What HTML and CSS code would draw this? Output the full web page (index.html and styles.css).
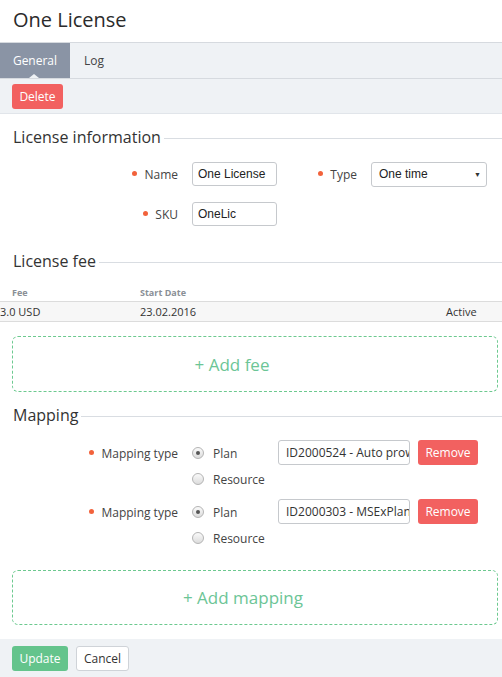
FILE: index.html
```html
<!DOCTYPE html>
<html>
<head>
<meta charset="utf-8">
<link rel="stylesheet" href="styles.css">
</head>
<body>
<div class="page">
  <header class="header"><h1 class="title">One License</h1></header>
  <nav class="tabs">
    <div class="tab active">General</div>
    <div class="tab">Log</div>
  </nav>
  <div class="toolbar"><button class="btn btn-red btn-delete">Delete</button></div>

  <section class="section">
    <div class="sec-title"><span>License information</span><i></i></div>
    <div class="form">
      <div class="frow">
        <label class="lbl lbl-first"><b class="dot"></b>Name</label>
        <input class="inp inp-name" value="One License">
        <label class="lbl lbl-type"><b class="dot"></b>Type</label>
        <div class="select"><span>One time</span><span class="arrow">▼</span></div>
      </div>
      <div class="frow">
        <label class="lbl lbl-first"><b class="dot"></b>SKU</label>
        <input class="inp inp-name" value="OneLic">
      </div>
    </div>
  </section>

  <section class="section sec-fee">
    <div class="sec-title"><span>License fee</span><i></i></div>
    <div class="table">
      <div class="thead"><span class="c1">Fee</span><span class="c2">Start Date</span></div>
      <div class="trow"><span class="c1 clip">3.0 USD</span><span class="c2">23.02.2016</span><span class="c3">Active</span></div>
    </div>
    <div class="addbox addfee">+ Add fee</div>
  </section>

  <section class="section sec-map">
    <div class="sec-title"><span>Mapping</span><i></i></div>
    <div class="mapping">
      <div class="mrow">
        <label class="lbl lbl-first"><b class="dot"></b>Mapping type</label>
        <div class="radios">
          <div class="radio-line"><span class="radio checked"></span>Plan</div>
          <div class="radio-line"><span class="radio"></span>Resource</div>
        </div>
        <div class="minp">ID2000524 - Auto prow</div>
        <button class="btn btn-red btn-remove">Remove</button>
      </div>
      <div class="mrow">
        <label class="lbl lbl-first"><b class="dot"></b>Mapping type</label>
        <div class="radios">
          <div class="radio-line"><span class="radio checked"></span>Plan</div>
          <div class="radio-line"><span class="radio"></span>Resource</div>
        </div>
        <div class="minp">ID2000303 - MSExPlan</div>
        <button class="btn btn-red btn-remove">Remove</button>
      </div>
    </div>
    <div class="addbox addmap">+ Add mapping</div>
  </section>

  <footer class="footer">
    <button class="btn btn-green">Update</button>
    <button class="btn btn-white">Cancel</button>
  </footer>
</div>
</body>
</html>
```
FILE: styles.css
```css
* { box-sizing: border-box; }
html, body { margin: 0; padding: 0; background: #fff; }
body { font-family: "Open Sans", "Liberation Sans", sans-serif; color: #333; width: 502px; height: 677px; overflow: hidden; }
.page { width: 502px; min-height: 677px; display: flex; flex-direction: column; }
.page > * { flex-shrink: 0; }

.header { height: 43px; border-bottom: 1px solid #d6dadf; padding-left: 13px; }
.title { margin: 0; font-weight: 400; font-size: 20px; line-height: 40px; color: #2b2b2b; }

.tabs { height: 36px; background: #eff2f5; border-bottom: 1px solid #d6dadf; display: flex; }
.tab { font-size: 12px; line-height: 35px; padding: 0 14px; color: #444; }
.tab.active { background: #8a94a5; color: #fff; width: 70px; padding: 0; text-align: center; position: relative; }
.tab.active::after { content: ""; position: absolute; left: 29px; bottom: 0; border-left: 5px solid transparent; border-right: 5px solid transparent; border-bottom: 4px solid #eff2f5; }

.toolbar { height: 35px; background: #eff2f5; border-bottom: 1px solid #e1e5ea; padding: 5px 12px; }

.btn { font-family: "Open Sans", "Liberation Sans", sans-serif; font-size: 12px; border-radius: 3px; border: 0; height: 25px; padding: 0 10px; line-height: 25px; cursor: pointer; }
.btn-red { background: #f26160; color: #fff; }
.btn-delete { width: 51px; padding: 0; }
.btn-green { background: #64c48c; color: #fff; }
.btn-white { background: #fff; color: #333; border: 1px solid #cfd3d8; line-height: 23px; padding: 0 9px; }

.section { padding-top: 12px; }
.sec-title { display: flex; align-items: center; padding-left: 13px; height: 22px; }
.sec-title span { font-size: 16px; color: #333; white-space: nowrap; }
.sec-title i { flex: 1; height: 1px; background: #d9dde2; margin-left: 3px; margin-top: 2px; }

.form { padding-top: 14px; display: flex; flex-direction: column; gap: 16px; }
.frow { display: flex; align-items: center; height: 24px; }
.lbl { font-size: 12px; color: #444; display: flex; align-items: center; justify-content: flex-end; white-space: nowrap; }
.lbl-first { width: 178px; margin-right: 14px; }
.lbl-type { width: 80px; margin-right: 14px; }
.dot { width: 5px; height: 5px; border-radius: 50%; background: #f2623b; margin-right: 7px; margin-top: -1px; }
.inp { font-family: "Liberation Sans", Arial, sans-serif; font-size: 12px; color: #222; height: 24px; border: 1px solid #c6c9cd; border-radius: 3px; padding: 0 5px; }
.inp-name { width: 85px; }
.select { width: 116px; height: 25px; border: 1px solid #c6c9cd; border-radius: 3px; display: flex; align-items: center; justify-content: space-between; padding: 0 5px 0 7px; font-family: "Liberation Sans", Arial, sans-serif; font-size: 12px; color: #222; }
.arrow { font-size: 7px; color: #333; }

.sec-fee { padding-top: 24px; }
.table { margin-top: 12px; }
.thead { height: 18px; display: flex; align-items: center; font-size: 9px; font-weight: 700; color: #8a8f96; border-bottom: 1px solid #dcdcdc; }
.trow { height: 20px; display: flex; align-items: center; font-size: 11px; background: #f7f7f7; border-bottom: 1px solid #dcdcdc; color: #333; }
.c1 { width: 140px; padding-left: 12px; }
.clip { padding-left: 0; }
.c2 { width: 306px; }

.addbox { margin: 14px 0 0 12px; width: 486px; height: 56px; border: 1px dashed #6cc98f; border-radius: 6px; display: flex; align-items: center; justify-content: center; font-size: 17px; color: #6cc596; }
.addfee { padding-right: 46px; }
.addmap { margin-top: 19px; height: 55px; padding-right: 24px; }

.sec-map { padding-top: 12px; }
.mapping { padding-top: 14px; display: flex; flex-direction: column; gap: 7px; }
.mrow { display: flex; align-items: flex-start; }
.mrow .lbl { height: 26px; }
.radios { width: 86px; display: flex; flex-direction: column; }
.radio-line { height: 26px; display: flex; align-items: center; font-size: 12px; color: #444; }
.radio { width: 12px; height: 12px; border-radius: 50%; border: 1px solid #b4b4b4; background: linear-gradient(#fafafa, #dcdcdc); margin-right: 9px; display: flex; align-items: center; justify-content: center; }
.radio.checked::after { content: ""; width: 4px; height: 4px; border-radius: 50%; background: #555; }
.minp { width: 132px; height: 25px; border: 1px solid #c6c9cd; border-radius: 3px; font-size: 12px; line-height: 23px; padding-left: 7px; white-space: nowrap; overflow: hidden; color: #333; }
.btn-remove { margin-left: 8px; width: 60px; padding: 0; font-size: 12px; }

.footer { margin-top: 14px; flex: 1 0 auto; background: #eff2f5; padding: 7px 12px; display: flex; gap: 8px; align-items: flex-start; }
.btn-green { width: 56px; padding: 0; }
.btn-white { width: 53px; padding: 0; }
```
